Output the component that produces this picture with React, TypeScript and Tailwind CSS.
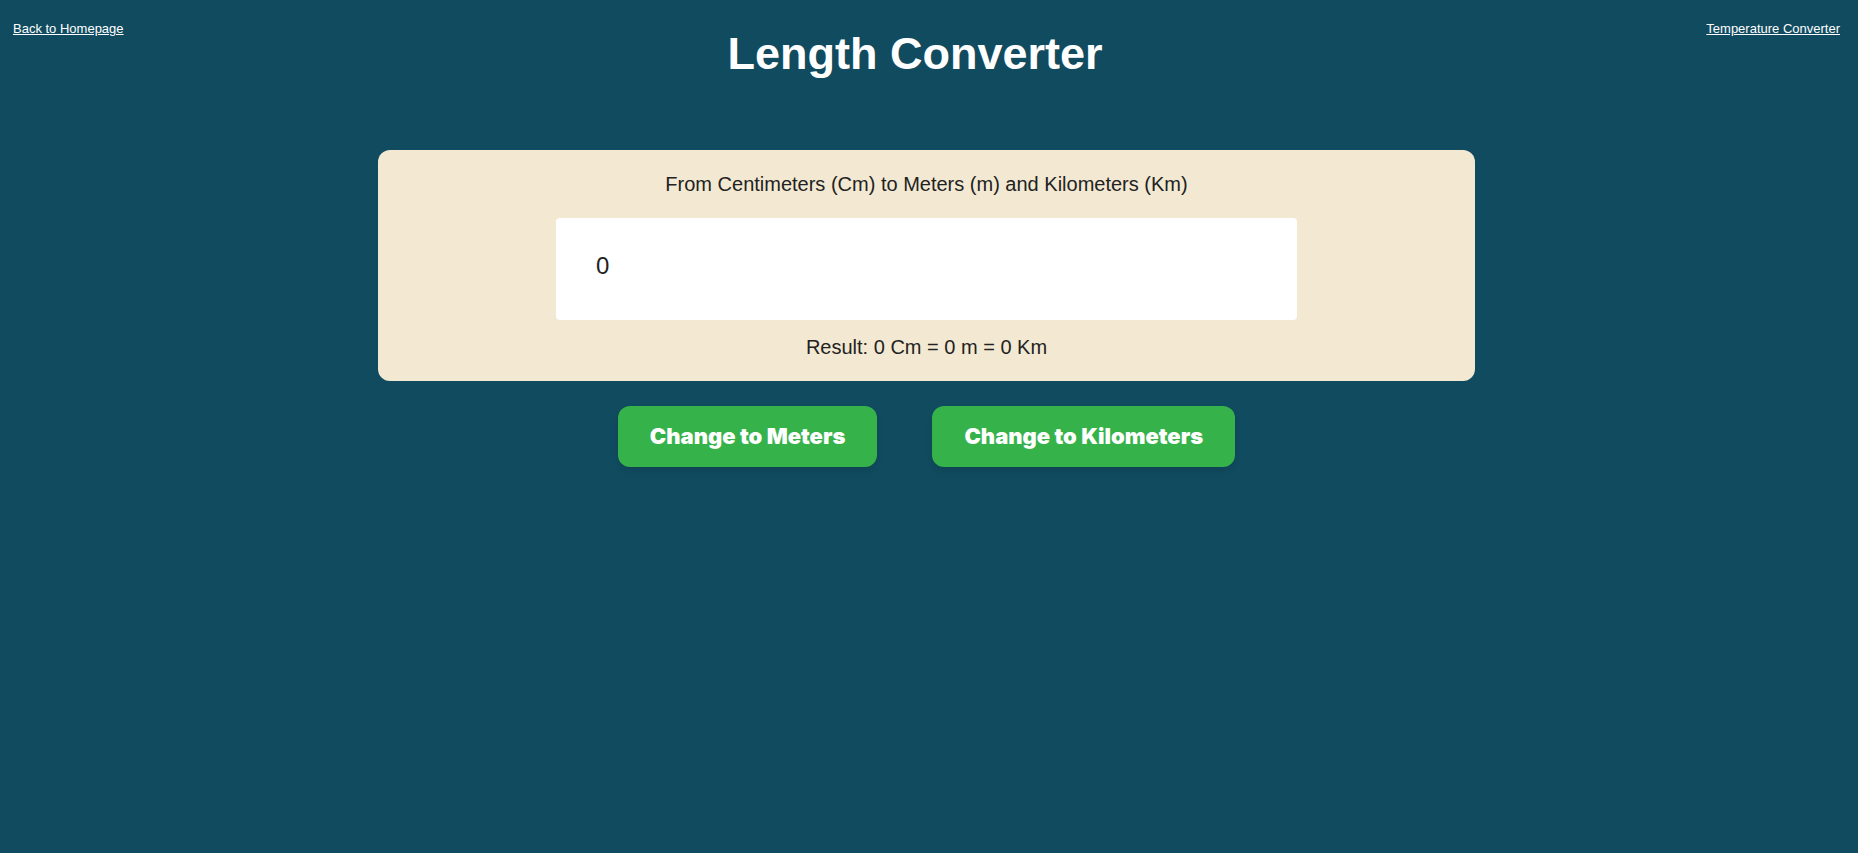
import { useState } from "react";

type Unit = "cm" | "m" | "km";

const buttonClass =
  "h-[61px] rounded-xl bg-[#35b24a] px-8 font-['Inter','Liberation_Sans',sans-serif] text-[22px] font-black text-white shadow-[0_4px_6px_rgba(0,0,0,0.1)]";

export default function App() {
  const [value, setValue] = useState("0");
  const [unit, setUnit] = useState<Unit>("cm");
  const n = Number(value) || 0;
  const cm = unit === "cm" ? n : unit === "m" ? n * 100 : n * 100000;
  return (
    <div className="min-h-screen bg-[#114b5f] pr-[5px] font-['Liberation_Sans',Arial,sans-serif] text-[#222222]">
      <header className="flex items-start justify-between px-[13px] pt-[21px] text-white">
        <a href="#home" className="text-[13px] leading-4 underline">Back to Homepage</a>
        <h1 className="pt-[3px] text-[45px] leading-[60px] font-bold">Length Converter</h1>
        <a href="#temperature" className="text-[13px] leading-4 underline">Temperature Converter</a>
      </header>
      <main className="mx-auto mt-[66px] flex w-[59vw] flex-col items-center">
        <section className="flex w-full flex-col items-center rounded-xl bg-[#f3e9d2] py-5 text-xl">
          <label htmlFor="length" className="leading-7">From Centimeters (Cm) to Meters (m) and Kilometers (Km)</label>
          <input id="length" type="text" value={value} onChange={(e) => setValue(e.target.value)} className="mt-5 h-[102px] w-[741px] max-w-full rounded bg-white px-10 pb-1.5 text-2xl" />
          <output htmlFor="length" className="mt-[13px] leading-7">Result: {cm} Cm = {cm / 100} m = {cm / 100000} Km</output>
        </section>
        <div className="mt-[25px] flex gap-[55px]">
          <button type="button" onClick={() => setUnit("m")} className={buttonClass}>Change to Meters</button>
          <button type="button" onClick={() => setUnit("km")} className={buttonClass}>Change to Kilometers</button>
        </div>
      </main>
    </div>
  );
}
